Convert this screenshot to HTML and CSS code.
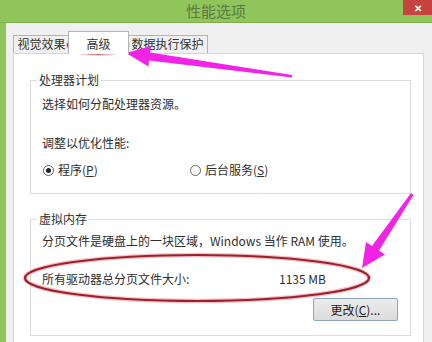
FILE: index.html
```html
<!DOCTYPE html>
<html lang="zh-CN">
<head>
    <title>性能选项</title>
    <meta charset="UTF-8">
    <meta name="viewport" content="width=device-width, initial-scale=1">
    <link rel="stylesheet" href="styles.css">
</head>
<body>
    <div class="window">
        <div class="titlebar">
            <span></span>
            <span class="title">性能选项</span>
            <span class="close">✕</span>
        </div>

        <div class="client">
            <!-- Abas -->
            <div class="tabs">
                <div class="tab tab-first">视觉效果</div>
                <div class="tab tab-active">高级</div>
                <div class="tab tab-last">数据执行保护</div>
            </div>

            <div class="panel">
                <!-- 处理器计划 -->
                <div class="group group-cpu">
                    <div class="group-title">处理器计划</div>
                    <p class="line first">选择如何分配处理器资源。</p>
                    <p class="line second">调整以优化性能:</p>
                    <div class="radios">
                        <label class="radio-item radio-one"><span class="radio checked"></span><span>程序(<u>P</u>)</span></label>
                        <label class="radio-item"><span class="radio"></span><span>后台服务(<u>S</u>)</span></label>
                    </div>
                </div>

                <!-- 虚拟内存 -->
                <div class="group group-mem">
                    <div class="group-title">虚拟内存</div>
                    <p class="line first-mem">分页文件是硬盘上的一块区域，Windows 当作 RAM 使用。</p>
                    <div class="size-row">
                        <span class="size-label">所有驱动器总分页文件大小:</span>
                        <span>1135 MB</span>
                    </div>
                    <div class="btn-row">
                        <button class="btn">更改(<u>C</u>)...</button>
                    </div>
                </div>
            </div>
        </div>
    </div>

    <!-- marcações do print -->
    <svg class="marks" width="432" height="342" viewBox="0 0 432 342">
        <ellipse cx="98" cy="45" rx="30" ry="8.5" fill="none" stroke="#f3c2c8" stroke-width="4.5"/>
        <ellipse cx="98" cy="45" rx="30" ry="8.5" fill="none" stroke="#9e1f2a" stroke-width="2.2"/>
        <ellipse cx="197" cy="278" rx="172" ry="23" fill="none" stroke="#f3c2c8" stroke-width="4.5"/>
        <ellipse cx="197" cy="278" rx="172" ry="23" fill="none" stroke="#9e1f2a" stroke-width="2.2"/>
        <polygon fill="#f023e6" points="126,53 151,46 150,52.5 292,75 292,77.5 149,60.5 148.5,66.5"/>
        <polygon fill="#f023e6" points="362,268 366,242 372,246 411,193 413.5,195 379,250.5 385,254.5"/>
    </svg>
</body>
</html>
```

FILE: styles.css
```css
* { box-sizing: border-box; }
body { margin: 0; width: 432px; height: 342px; overflow: hidden; position: relative; font-family: "Noto Sans CJK SC", "Noto Sans", sans-serif; font-size: 12px; color: #2e2e2e; background: #90c55b; }
.window { display: flex; flex-direction: column; height: 342px; }
.titlebar { display: grid; grid-template-columns: 1fr auto 1fr; height: 23px; background: #90c55b; border-bottom: 1px solid #7fb04f; }
.title { font-size: 15px; line-height: 22px; color: #5b7a40; }
.close { justify-self: end; width: 29px; height: 15px; background: #c8433d; color: #fff; font-size: 10px; line-height: 15px; text-align: center; font-weight: bold; }
.client { flex: 1; margin-left: 6px; background: #f0f0f0; padding: 8px 8px 0 7px; }
.tabs { display: flex; align-items: flex-end; height: 22px; }
.tab { height: 18px; line-height: 16px; border: 1px solid #b4b4b4; border-bottom: none; background: #f0f0f0; color: #333; text-align: center; }
.tab-first { width: 57px; }
.tab-active { position: relative; z-index: 1; width: 61px; height: 23px; margin: 0 -2px -1px; padding-top: 4px; background: #fff; }
.tab-last { width: 81px; }
.panel { height: 300px; background: #fff; border: 1px solid #d6d6d6; padding: 26px 12px 0 16px; }
.group { border: 1px solid #dcdcdc; padding: 0 12px 0 11px; }
.group-cpu { padding-bottom: 15px; }
.group-mem { margin-top: 25px; padding-bottom: 14px; }
.group-title { display: table; margin: -9px 0 0 -5px; padding: 0 2px; background: #fff; line-height: 16px; }
.line { margin: 0; line-height: 16px; }
.first { margin-top: 8px; }
.second { margin-top: 23px; }
.first-mem { margin-top: 6px; }
.radios { display: flex; margin-top: 11px; line-height: 16px; }
.radio-item { display: flex; align-items: center; gap: 4px; }
.radio-one { width: 147px; margin-left: 1px; }
.radio { width: 11px; height: 11px; border: 1px solid #666; border-radius: 50%; background: #fff; display: flex; align-items: center; justify-content: center; }
.radio.checked::after { content: ""; width: 5px; height: 5px; border-radius: 50%; background: #222; }
.size-row { display: grid; grid-template-columns: 237px auto; margin-top: 22px; line-height: 16px; }
.btn-row { display: flex; justify-content: flex-end; margin-top: 11px; }
.btn { width: 85px; height: 23px; font: inherit; color: #222; background: linear-gradient(#ececec, #dcdcdc); border: 1px solid #8ea5bd; border-radius: 2px; padding: 0; }
.marks { position: absolute; left: 0; top: 0; pointer-events: none; }
```
